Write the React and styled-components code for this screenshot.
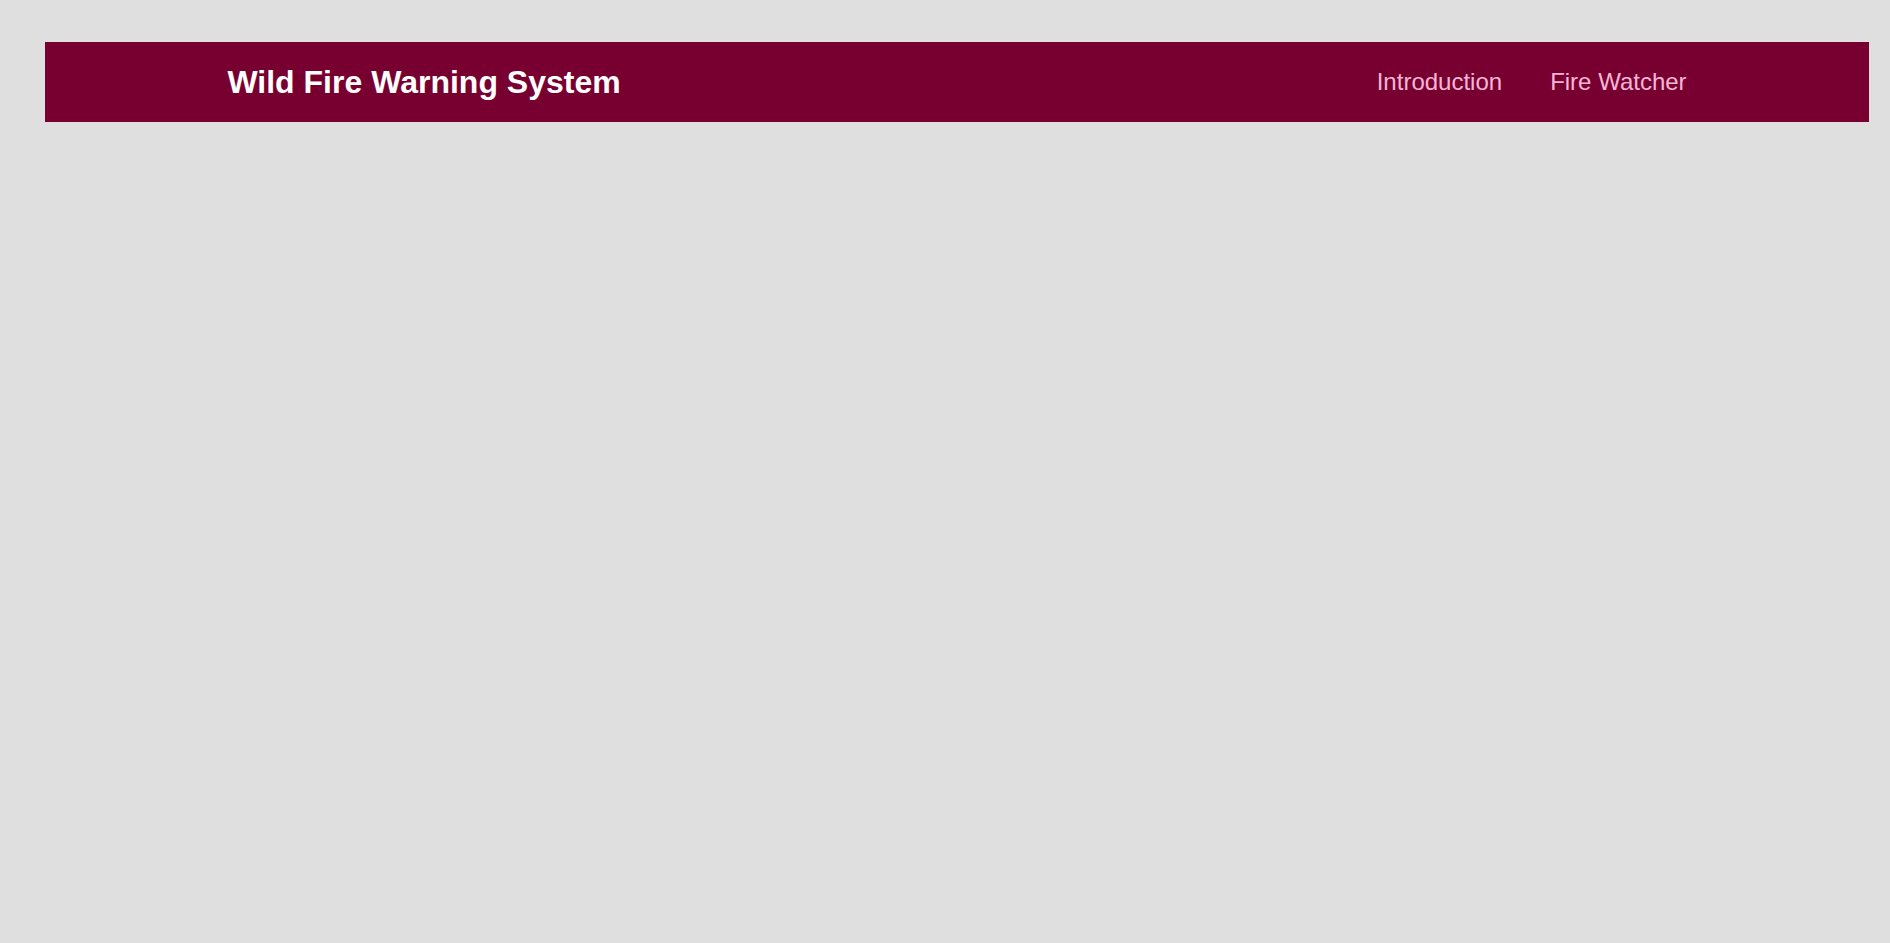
import React from "react";
import styled, { createGlobalStyle } from "styled-components";

const GlobalStyle = createGlobalStyle`
  html, body {
    margin: 0;
    padding: 0;
    background: #dfdfdf;
    font-family: "Liberation Sans", Arial, sans-serif;
  }
`;

const Page = styled.div`
  min-height: 943px;
  padding: 42px 21px 0 45px;
  box-sizing: border-box;
`;

const Header = styled.header`
  height: 80px;
  background: #780030;
  display: flex;
  justify-content: center;
`;

const Inner = styled.div`
  width: 80%;
  display: flex;
  align-items: center;
  justify-content: space-between;
`;

const Title = styled.h1`
  margin: 0;
  font-size: 32px;
  font-weight: 700;
  color: #ffffff;
`;

const Nav = styled.nav`
  display: flex;
  align-items: center;
  gap: 48px;
`;

const NavLink = styled.a`
  font-size: 24px;
  color: #f7b6d6;
  text-decoration: none;
  cursor: pointer;
`;

const App = () => {
  return (
    <>
      <GlobalStyle />
      <Page>
        <Header>
          <Inner>
            <Title>Wild Fire Warning System</Title>
            <Nav>
              <NavLink>Introduction</NavLink>
              <NavLink>Fire Watcher</NavLink>
            </Nav>
          </Inner>
        </Header>
      </Page>
    </>
  );
};

export default App;
